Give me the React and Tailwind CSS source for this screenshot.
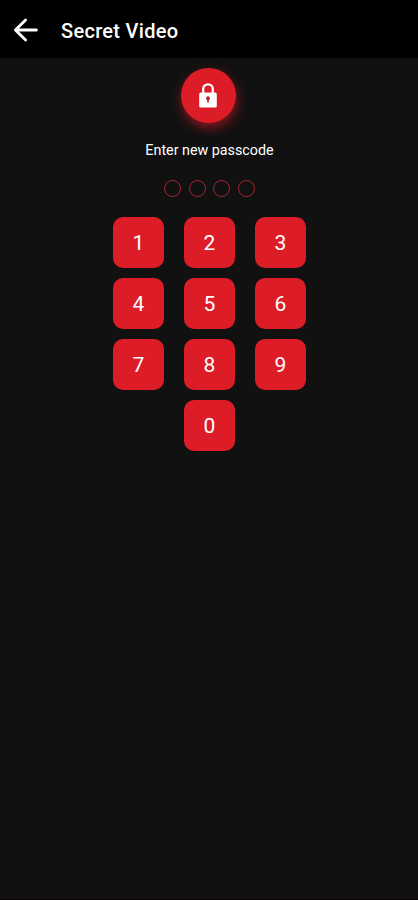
import React, { useState } from 'react';

const keys = ['1', '2', '3', '4', '5', '6', '7', '8', '9', '0'];

const BackIcon = () => (
  <svg width="26" height="26" viewBox="0 0 26 26" fill="none" stroke="white" strokeWidth="2.8" strokeLinecap="round" strokeLinejoin="round">
    <path d="M12.6 2.9 L2.4 13 L12.6 23.1 M2.8 13 H23.4" />
  </svg>
);

const LockIcon = () => (
  <svg width="18" height="25" viewBox="0 0 18 25" fill="none">
    <path d="M4.2 10.5 V5.9 C4.2 3.3 6.3 1.4 9 1.4 C11.7 1.4 13.8 3.3 13.8 5.9 V10.5" stroke="white" strokeWidth="2.2" />
    <rect x="0.2" y="9.4" width="17.6" height="15" rx="1.5" fill="white" />
    <circle cx="9" cy="15.2" r="1.9" fill="#b81c25" />
    <path d="M8.2 15.5 H9.8 V19.5 H8.2 Z" fill="#b81c25" />
  </svg>
);

const App = () => {
  const [code, setCode] = useState('');

  const handlePress = (key) => {
    if (code.length < 4) setCode(code + key);
  };

  return (
    <div className="flex flex-col h-screen overflow-hidden bg-[#111111] text-white font-['Roboto',sans-serif]">
      {/* Header */}
      <header className="flex items-center h-[58px] shrink-0 bg-black pl-[13px] pt-[2px]">
        <button aria-label="Back" onClick={() => setCode('')}>
          <BackIcon />
        </button>
        <h1 className="ml-[22px] pt-px text-[20px] leading-6 tracking-[0.3px] font-medium">Secret Video</h1>
      </header>

      <main className="flex-1 flex flex-col items-center pt-[10px]">
        <div className="w-[55px] h-[55px] mr-[2px] rounded-full bg-[#dc1d27] flex items-center justify-center shadow-[1px_5px_12px_rgba(220,29,39,0.6)]">
          <LockIcon />
        </div>

        <p className="mt-[17px] ml-px text-[14.3px] leading-5">Enter new passcode</p>

        <div className="mt-[20px] ml-px flex gap-[7.7px]">
          {[0, 1, 2, 3].map((i) => (
            <span
              key={i}
              className={`w-[17px] h-[17px] rounded-full border border-[#a92531] ${i < code.length ? 'bg-[#a92531]' : ''}`}
            />
          ))}
        </div>

        {/* Keypad */}
        <div className="mt-[20px] ml-px grid grid-cols-3 gap-x-[20px] gap-y-[10px]">
          {keys.map((key) => (
            <button
              key={key}
              onClick={() => handlePress(key)}
              className="w-[51px] h-[51px] pt-[2px] rounded-[10px] bg-[#dc1d27] text-[21px] leading-none flex items-center justify-center last:col-start-2"
            >
              {key}
            </button>
          ))}
        </div>
      </main>

      <div className="h-px shrink-0 bg-[#0a0508]" />
    </div>
  );
};

export default App;
